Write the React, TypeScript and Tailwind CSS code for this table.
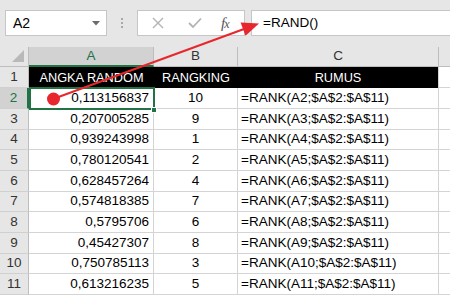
import React from 'react';

const rowHeights = [21, 21, 21, 20, 21, 21, 20, 21, 21, 20, 21];

const data: [string, string, string][] = [
  ['0,113156837', '10', '=RANK(A2;$A$2:$A$11)'],
  ['0,207005285', '9', '=RANK(A3;$A$2:$A$11)'],
  ['0,939243998', '1', '=RANK(A4;$A$2:$A$11)'],
  ['0,780120541', '2', '=RANK(A5;$A$2:$A$11)'],
  ['0,628457264', '4', '=RANK(A6;$A$2:$A$11)'],
  ['0,574818385', '7', '=RANK(A7;$A$2:$A$11)'],
  ['0,5795706', '6', '=RANK(A8;$A$2:$A$11)'],
  ['0,45427307', '8', '=RANK(A9;$A$2:$A$11)'],
  ['0,750785113', '3', '=RANK(A10;$A$2:$A$11)'],
  ['0,613216235', '5', '=RANK(A11;$A$2:$A$11)'],
];

function FormulaBar() {
  return (
    <div className="h-[47px] bg-[#e6e6e6] flex items-start pt-[10px] pl-[5px]">
      {/* name box */}
      <div className="w-[102px] h-[26px] bg-white border border-[#c6c6c6] flex items-center justify-between pl-[7px] pr-[6px]">
        <span className="text-[14px] text-black">A2</span>
        <svg width="8" height="5" viewBox="0 0 8 5">
          <polygon points="0,0 8,0 4,4.5" fill="#6b6b6b" />
        </svg>
      </div>
      <div className="w-[30px] h-[26px] flex flex-col items-center justify-center gap-[2px]">
        <div className="w-[2px] h-[2px] bg-[#a8a8a8]" />
        <div className="w-[2px] h-[2px] bg-[#a8a8a8]" />
        <div className="w-[2px] h-[2px] bg-[#a8a8a8]" />
      </div>
      {/* cancel / enter / fx */}
      <div className="w-[108px] h-[26px] bg-white border border-[#c6c6c6] flex items-center pl-[14px]">
        <svg width="12" height="12" viewBox="0 0 12 12">
          <path d="M1 1 L11 11 M11 1 L1 11" stroke="#b3b3b3" strokeWidth="1.4" fill="none" />
        </svg>
        <svg width="14" height="12" viewBox="0 0 14 12" className="ml-[24px]">
          <path d="M1 6 L5 10 L13 1.5" stroke="#b3b3b3" strokeWidth="1.8" fill="none" />
        </svg>
        <span className="ml-[19px] text-[15px] italic text-[#555] font-['Liberation_Serif',serif] leading-none tracking-[-1px]">
          f<span className="text-[12px]">x</span>
        </span>
      </div>
      <div className="ml-[6px] flex-1 h-[26px] bg-white border border-[#c6c6c6] border-r-0 flex items-center pl-[11px]">
        <span className="text-[13.5px] text-black">=RAND()</span>
      </div>
    </div>
  );
}

function HeaderRow() {
  return (
    <div className="h-[20px] bg-[#e6e6e6] flex">
      <div className="w-[29px] border-r border-b border-[#bdbdbd] flex items-end justify-end pr-[4px] pb-[4px]">
        <svg width="12" height="12" viewBox="0 0 12 12">
          <polygon points="12,0 12,12 0,12" fill="#b9b9b9" />
        </svg>
      </div>
      <div className="w-[125px] bg-[#d2d2d2] border-r border-[#bdbdbd] border-b-2 border-b-[#217346] flex items-center justify-center text-[#217346] text-[13.5px]">
        A
      </div>
      <div className="w-[84px] border-r border-b border-[#bdbdbd] flex items-center justify-center text-[#333] text-[13.5px]">
        B
      </div>
      <div className="w-[201px] border-r border-b border-[#bdbdbd] flex items-center justify-center text-[#333] text-[13.5px]">
        C
      </div>
      <div className="flex-1 border-b border-[#bdbdbd]" />
    </div>
  );
}

export default function App() {
  return (
    <div className="relative w-[450px] h-[300px] overflow-hidden bg-white font-['Liberation_Sans',Arial,sans-serif]">
      <FormulaBar />
      <HeaderRow />

      {/* row 1 */}
      <div className="flex text-[12.75px]" style={{ height: rowHeights[0] }}>
        <div className="w-[29px] text-[13.5px] bg-[#e6e6e6] border-r border-[#bdbdbd] border-b border-b-[#d0d0d0] flex items-center justify-center text-[#333]">
          1
        </div>
        <div className="w-[125px] bg-black text-white flex items-center justify-center">ANGKA RANDOM</div>
        <div className="w-[84px] bg-black text-white flex items-center justify-center">RANGKING</div>
        <div className="w-[201px] bg-black text-white flex items-center justify-center border-r border-[#d4d4d4]">RUMUS</div>
        <div className="flex-1 border-b border-[#d4d4d4]" />
      </div>

      {data.map((row, i) => {
        const selected = i === 0;
        return (
          <div key={i} className="flex text-[13.5px] text-black" style={{ height: rowHeights[i + 1] }}>
            <div
              className={`w-[29px] border-b border-b-[#d0d0d0] flex items-center justify-center ${
                selected
                  ? 'bg-[#d2d2d2] text-[#217346] border-r-2 border-r-[#217346]'
                  : 'bg-[#e6e6e6] text-[#333] border-r border-r-[#bdbdbd]'
              }`}
            >
              {i + 2}
            </div>
            <div className="w-[125px] border-r border-b border-[#d4d4d4] flex items-center justify-end pr-[4px]">
              {row[0]}
            </div>
            <div className="w-[84px] border-r border-b border-[#d4d4d4] flex items-center justify-center">
              {row[1]}
            </div>
            <div className="w-[201px] border-r border-b border-[#d4d4d4] flex items-center pl-[3px]">
              {row[2]}
            </div>
            <div className="flex-1 border-b border-[#d4d4d4]" />
          </div>
        );
      })}

      {/* active cell A2 */}
      <div className="absolute left-[29px] top-[87px] w-[126px] h-[23px] border-2 border-[#217346] pointer-events-none" />
      <div className="absolute left-[151px] top-[107px] w-[6px] h-[6px] bg-[#217346] border border-white" />

      {/* annotation */}
      <svg className="absolute left-0 top-0 pointer-events-none" width="450" height="300">
        <line x1="53" y1="99" x2="244" y2="29" stroke="#e8262d" strokeWidth="2" />
        <polygon points="259,23.5 245.5,35.8 240.6,22.6" fill="#e8262d" />
        <circle cx="53.5" cy="99" r="6.5" fill="#e8262d" />
      </svg>
    </div>
  );
}
